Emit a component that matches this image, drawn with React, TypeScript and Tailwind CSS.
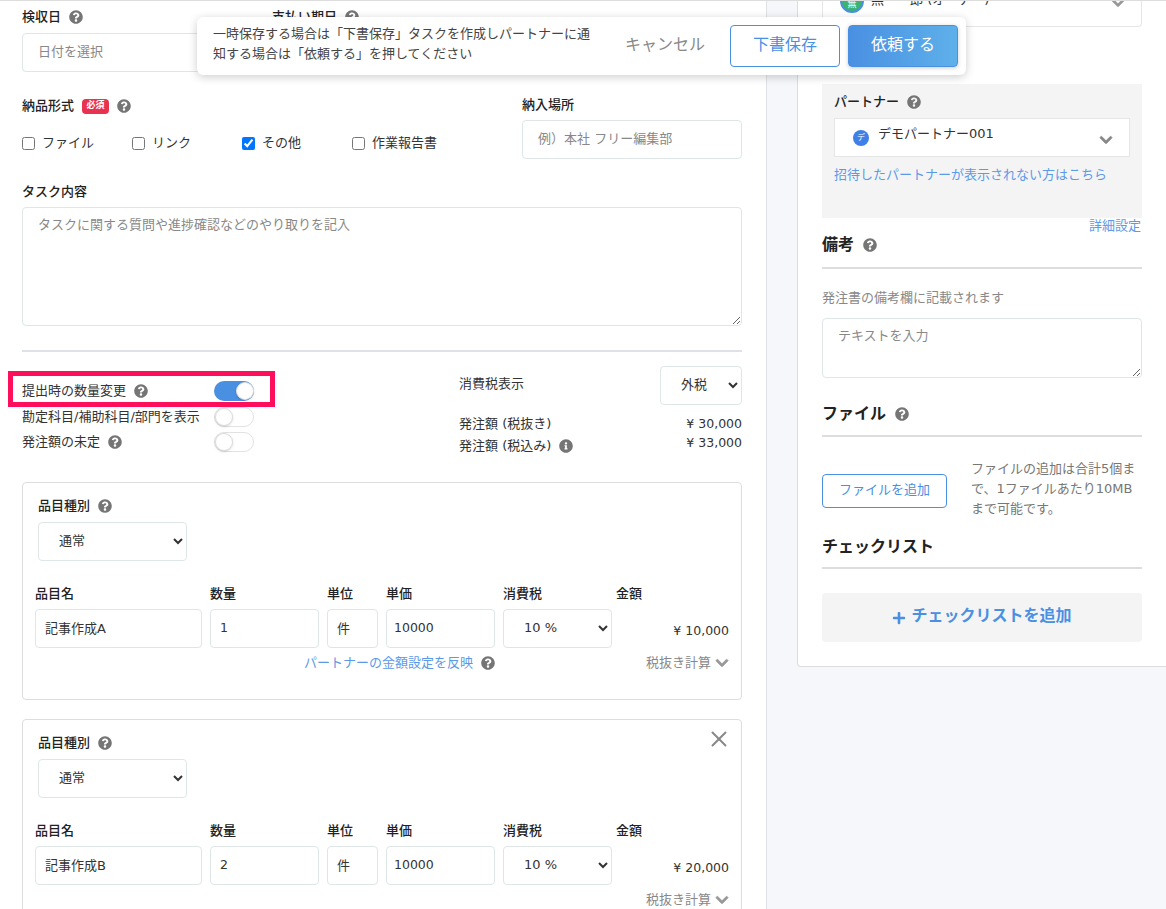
import React from "react";
import { FaQuestionCircle, FaInfoCircle, FaChevronDown, FaPlus } from "react-icons/fa";
import { X } from "lucide-react";

const fieldClass =
  "h-[39px] w-full rounded border border-[#dee6e8] bg-white pb-[2px] text-[#333] outline-none placeholder:text-[#888]";
const selectClass =
  "h-[39px] rounded border border-[#dee6e8] bg-white pb-[2px] text-[13px] text-[#333] outline-none";
const labelClass = "flex h-[18px] items-center text-[13px] font-medium text-[#222]";
const textareaClass =
  "rounded border border-[#dee6e8] px-[15px] py-[7px] text-[13px] outline-none placeholder:text-[#888]";

const Help = ({ className = "ml-2" }: { className?: string }) => (
  <FaQuestionCircle className={`h-[14px] w-[14px] shrink-0 text-[#757575] ${className}`} />
);

const Toggle = ({ on = false }: { on?: boolean }) => (
  <div
    className={
      on
        ? "flex h-[20px] w-[40px] items-center justify-end rounded-full bg-[#4a90e2]"
        : "flex h-[20px] w-[40px] items-center justify-start rounded-full border border-[#e2e2e2] bg-white"
    }
  >
    <div className="h-[18px] w-[18px] rounded-full border border-[#dcdcdc] bg-white shadow-sm" />
  </div>
);

const ItemCard = ({
  name,
  qty,
  amount,
  closable,
  partnerLink,
}: {
  name: string;
  qty: string;
  amount: string;
  closable?: boolean;
  partnerLink?: boolean;
}) => (
  <div className="relative h-[218px] shrink-0 rounded border border-[#dddddd] bg-white px-[12px] pt-[14px]">
    {closable && (
      <X strokeWidth={1.8} className="absolute top-[6px] right-[9px] h-[26px] w-[26px] text-[#888]" />
    )}
    <div className={`${labelClass} ml-[3px]`}>
      品目種別
      <Help />
    </div>
    <select defaultValue="通常" className={`${selectClass} mt-[7px] ml-[3px] w-[149px] pl-[16px]`}>
      <option>通常</option>
    </select>
    <div className="mt-[23px] grid grid-cols-[167px_109px_51px_109px_109px_1fr] gap-x-2 gap-y-[7px]">
      <div className={`${labelClass} pt-[2px]`}>品目名</div>
      <div className={`${labelClass} pt-[2px]`}>数量</div>
      <div className={`${labelClass} pt-[2px]`}>単位</div>
      <div className={`${labelClass} pt-[2px]`}>単価</div>
      <div className={`${labelClass} pt-[2px]`}>消費税</div>
      <div className={`${labelClass} -ml-1 pt-[2px]`}>金額</div>
      <input readOnly value={name} className={`${fieldClass} px-[9px] text-[13px]`} />
      <input readOnly value={qty} className={`${fieldClass} px-[9px] text-[12.5px]`} />
      <input readOnly value="件" className={`${fieldClass} px-[9px] text-[13px]`} />
      <input readOnly value="10000" className={`${fieldClass} px-[7px] text-[12.5px]`} />
      <select defaultValue="10 %" className={`${selectClass} w-full pl-[16px]`}>
        <option>10 %</option>
      </select>
      <div className="flex h-[39px] items-center justify-end pt-[5px] text-[12.5px] text-[#333]">{amount}</div>
    </div>
    <div className="mt-[6px] flex h-[18px] items-center justify-end gap-[151px] text-[13px]">
      {partnerLink && (
        <div className="flex items-center text-[#5c9ae8]">
          パートナーの金額設定を反映
          <Help />
        </div>
      )}
      <div className="flex items-center text-[#888]">
        税抜き計算
        <FaChevronDown stroke="currentColor" strokeWidth={30} className="ml-[4px] h-[14px] w-[14px] text-[#999]" />
      </div>
    </div>
  </div>
);

const FormatCheck = ({ label, checked }: { label: string; checked?: boolean }) => (
  <label className="flex w-[110px] items-center text-[13px] text-[#333]">
    <input type="checkbox" readOnly checked={!!checked} className="mr-[7px] h-[13px] w-[13px]" />
    {label}
  </label>
);

const SectionTitle = ({ title, help, className = "" }: { title: string; help?: boolean; className?: string }) => (
  <>
    <div className={`flex h-[20px] items-center text-[16px] font-bold text-[#222] ${className}`}>
      {title}
      {help && <Help className="ml-[9px]" />}
    </div>
    <div className="mt-[12px] h-[2px] bg-[#dddddd]" />
  </>
);

export default function App() {
  return (
    <div className="relative flex h-[909px] w-[1166px] items-start overflow-hidden border-t border-[#dddddd] bg-[#f5f7fb] font-['DejaVu_Sans','Noto_Sans_CJK_JP',sans-serif]">
      {/* main form */}
      <div className="flex h-full w-[767px] shrink-0 flex-col border-r border-[#dee2e6] bg-white pr-[24px] pl-[22px]">
        <div className="flex shrink-0 gap-[22px]">
          <div className="w-[228px]">
            <div className={`${labelClass} mt-[7px] mb-[7px]`}>
              検収日
              <Help />
            </div>
            <input placeholder="日付を選択" className={`${fieldClass} px-[15px] text-[13px]`} />
          </div>
          <div className="w-[228px]">
            <div className={`${labelClass} mt-[7px] mb-[7px]`}>
              支払い期日
              <Help />
            </div>
            <input placeholder="日付を選択" className={`${fieldClass} px-[15px] text-[13px]`} />
          </div>
        </div>

        <div className="mt-[23px] flex shrink-0 justify-between">
          <div className="pt-[1px]">
            <div className={`${labelClass} pt-[2px]`}>
              納品形式
              <span className="ml-[8px] flex h-[15px] w-[27px] items-center justify-center rounded-sm bg-[#e8324f] text-[9px] font-bold text-white">
                必須
              </span>
              <Help />
            </div>
            <div className="mt-[19px] flex h-[20px] items-center">
              <FormatCheck label="ファイル" />
              <FormatCheck label="リンク" />
              <FormatCheck label="その他" checked />
              <FormatCheck label="作業報告書" />
            </div>
          </div>
          <div className="w-[220px]">
            <div className={`${labelClass} pt-[2px]`}>納入場所</div>
            <input placeholder="例）本社 フリー編集部" className={`${fieldClass} mt-[7px] px-[15px] text-[13px]`} />
          </div>
        </div>

        <div className={`${labelClass} mt-[24px] shrink-0`}>タスク内容</div>
        <textarea
          placeholder="タスクに関する質問や進捗確認などのやり取りを記入"
          className={`${textareaClass} mt-[6px] h-[119px] shrink-0`}
        />
        <div className="mt-[24px] h-[2px] shrink-0 bg-[#dee2e6]" />

        <div className="flex h-[104px] shrink-0 justify-between">
          <div className="w-[232px] pt-[26px] text-[13px] text-[#333]">
            <div className="flex h-[25px] items-center justify-between">
              <div className="flex items-center">
                提出時の数量変更
                <Help />
              </div>
              <Toggle on />
            </div>
            <div className="mt-[1px] flex h-[25px] items-center justify-between">
              勘定科目/補助科目/部門を表示
              <Toggle />
            </div>
            <div className="flex h-[25px] items-center justify-between">
              <div className="flex items-center">
                発注額の未定
                <Help />
              </div>
              <Toggle />
            </div>
          </div>
          <div className="w-[283px] pt-[14px] text-[13px] text-[#333]">
            <div className="flex items-center justify-between">
              <span className="-mt-[3px]">消費税表示</span>
              <select defaultValue="外税" className={`${selectClass} w-[82px] pl-[16px]`}>
                <option>外税</option>
              </select>
            </div>
            <div className="mt-[8px] flex h-[22px] items-center justify-between">
              <span>発注額 (税抜き)</span>
              <span className="text-[12.5px]">¥ 30,000</span>
            </div>
            <div className="flex h-[22px] items-center justify-between">
              <span className="flex items-center">
                発注額 (税込み)
                <FaInfoCircle className="ml-2 h-[14px] w-[14px] text-[#757575]" />
              </span>
              <span className="-mt-[5px] text-[12.5px]">¥ 33,000</span>
            </div>
          </div>
        </div>

        <div className="mt-[26px] flex shrink-0 flex-col gap-[19px]">
          <ItemCard name="記事作成A" qty="1" amount="¥ 10,000" partnerLink />
          <ItemCard name="記事作成B" qty="2" amount="¥ 20,000" closable />
        </div>
      </div>

      {/* side panel */}
      <div className="ml-[30px] w-[369px] rounded-bl border-b border-l border-[#dddddd] bg-white px-[24px] pb-[24px]">
        <div className="flex h-[26px] items-start justify-between overflow-hidden rounded-b border border-t-0 border-[#e6e6e6] pr-[16px] pl-[17px]">
          <div className="flex items-start text-[13px] text-[#333]">
            <span className="-mt-[12px] flex h-[24px] w-[24px] items-center justify-center rounded-full border-2 border-[#4a90e2] bg-[#3cb371] pt-[8px] text-[9px] text-white">
              無
            </span>
            <span className="-mt-[11px] ml-[7px] whitespace-nowrap">無　一郎 (オーナー)</span>
          </div>
          <FaChevronDown stroke="currentColor" strokeWidth={30} className="-mt-[5px] h-[14px] w-[14px] text-[#999]" />
        </div>

        <div className="mt-[57px] h-[134px] bg-[#f4f4f4] px-[12px] pt-[9px]">
          <div className={labelClass}>
            パートナー
            <Help />
          </div>
          <div className="mt-[7px] flex h-[39px] items-center justify-between border border-[#e6e6e6] bg-white pr-[16px] pl-[18px]">
            <div className="flex items-center text-[13px] text-[#333]">
              <span className="flex h-[16px] w-[16px] items-center justify-center rounded-full bg-[#3f7fe8] text-[8px] text-white">
                デ
              </span>
              <span className="-mt-[7px] ml-[9px]">デモパートナー001</span>
            </div>
            <FaChevronDown stroke="currentColor" strokeWidth={30} className="mt-[5px] h-[14px] w-[14px] text-[#888]" />
          </div>
          <div className="mt-[9px] flex h-[18px] items-center text-[13px] text-[#5c9ae8]">
            招待したパートナーが表示されない方はこちら
          </div>
        </div>
        <div className="-mt-[1px] flex h-[18px] items-center justify-end pr-[1px] text-[13px] text-[#5c9ae8]">
          詳細設定
        </div>

        <SectionTitle title="備考" help />
        <div className="mt-[20px] flex h-[18px] items-center text-[13px] text-[#888]">発注書の備考欄に記載されます</div>
        <textarea placeholder="テキストを入力" className={`${textareaClass} mt-[11px] block h-[60px] w-full`} />

        <div className="mt-[25px]">
          <SectionTitle title="ファイル" help className="pt-[1px]" />
        </div>
        <div className="mt-[22px] flex items-center justify-between">
          <button className="mt-[4px] h-[34px] w-[125px] rounded border border-[#4a90e2] bg-white pb-[2px] text-[13px] text-[#4a90e2]">
            ファイルを追加
          </button>
          <div className="w-[171px] text-[13px] leading-[20px] whitespace-nowrap text-[#777]">
            ファイルの追加は合計5個ま
            <br />
            で、1ファイルあたり10MB
            <br />
            まで可能です。
          </div>
        </div>

        <div className="mt-[17px]">
          <div className="flex h-[20px] items-center pt-[1px] text-[16px] font-bold text-[#222]">チェックリスト</div>
          <div className="mt-[11px] h-[2px] bg-[#dddddd]" />
        </div>
        <button className="mt-[24px] flex h-[49px] w-full items-center justify-center rounded bg-[#f4f4f4] pb-[3px] text-[16px] font-bold text-[#4a90e2]">
          <FaPlus className="mt-[3px] mr-[5px] h-[14px] w-[14px]" />
          チェックリストを追加
        </button>
      </div>

      {/* floating save bar */}
      <div className="absolute top-[16px] left-[197px] flex h-[58px] w-[769px] items-center rounded-md bg-white pr-[8px] pl-[16px] shadow-[0_2px_10px_rgba(0,0,0,0.2)]">
        <p className="-mt-[4px] w-[384px] text-[13px] leading-[20px] text-[#444]">
          一時保存する場合は「下書保存」タスクを作成しパートナーに通知する場合は「依頼する」を押してください
        </p>
        <span className="-mt-[3px] ml-[28px] w-[80px] text-[16px] whitespace-nowrap text-[#888]">キャンセル</span>
        <button className="ml-[25px] h-[42px] w-[110px] rounded border border-[#4a90e2] bg-white pb-[2px] text-[16px] text-[#4a90e2]">
          下書保存
        </button>
        <button className="ml-[8px] h-[42px] w-[110px] rounded border border-[#4a90e2] bg-gradient-to-r from-[#4a90e2] to-[#5eb0ea] pb-[2px] text-[16px] text-white shadow-[0_1px_4px_rgba(0,0,0,0.2)]">
          依頼する
        </button>
      </div>

      {/* highlight marker from the manual */}
      <div className="absolute top-[370px] left-[8px] h-[36px] w-[267px] border-[5px] border-[#ff0f5b]" />
    </div>
  );
}
